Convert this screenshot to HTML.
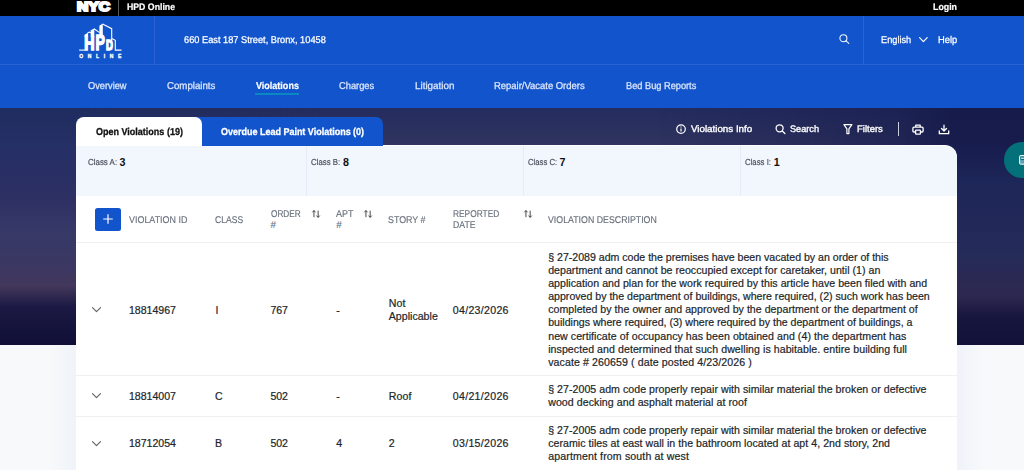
<!DOCTYPE html>
<html lang="en">
<head>
<meta charset="utf-8">
<title>HPD Online</title>
<style>
html,body{margin:0;padding:0;}
body{width:1024px;height:470px;overflow:hidden;position:relative;background:#f8f9fb;font-family:'Liberation Sans',sans-serif;}
.abs{position:absolute;}
.t{position:absolute;white-space:pre;line-height:14px;height:14px;font-family:'Liberation Sans',sans-serif;}
#topbar{left:0;top:0;width:1024px;height:16px;background:#000;}
#header{left:0;top:16px;width:1024px;height:48px;background:#1254cc;}
#hline{left:0;top:64px;width:1024px;height:1px;background:#2b63d6;}
#nav{left:0;top:65px;width:1024px;height:42.8px;background:#1254cc;}
.vdiv{width:1px;background:#2b63d6;top:16px;height:48px;}
#hero{left:0;top:107px;width:1024px;height:238px;background:linear-gradient(to bottom,rgb(36,44,94) 0px,rgb(48,52,95) 38px,rgb(50,54,100) 123px,rgb(56,48,88) 179px,rgb(26,24,66) 199px,rgb(19,18,58) 225px,rgb(17,15,55) 238px);}
#heroL{left:0;top:107px;width:320px;height:238px;background:linear-gradient(to bottom,rgb(31,44,94) 0px,rgb(37,48,102) 38px,rgb(41,47,100) 68px,rgb(46,48,99) 93px,rgb(54,57,104) 123px,rgb(60,55,98) 161px,rgb(67,55,91) 179px,rgb(28,26,68) 199px,rgb(19,18,58) 225px,rgb(17,15,55) 238px);
 -webkit-mask-image:linear-gradient(to right,#000 0,#000 80px,rgba(0,0,0,0) 320px);mask-image:linear-gradient(to right,#000 0,#000 80px,rgba(0,0,0,0) 320px);}
#heroR{left:660px;top:107px;width:364px;height:238px;background:linear-gradient(to bottom,rgb(22,27,75) 0px,rgb(23,28,76) 35px,rgb(29,38,88) 73px,rgb(37,43,89) 145px,rgb(46,40,80) 189px,rgb(23,22,62) 210px,rgb(18,17,58) 238px);
 -webkit-mask-image:linear-gradient(to left,#000 0,#000 70px,rgba(0,0,0,0.55) 130px,rgba(0,0,0,0.25) 250px,rgba(0,0,0,0) 364px);mask-image:linear-gradient(to left,#000 0,#000 70px,rgba(0,0,0,0.55) 130px,rgba(0,0,0,0.25) 250px,rgba(0,0,0,0) 364px);}
#shadow{left:48px;top:345px;width:937px;height:125px;background:linear-gradient(to right, rgba(240,244,250,0) 0, #eff3f9 28px, #eff3f9 909px, rgba(240,244,250,0) 937px);}
#card{left:76px;top:145px;width:881px;height:340px;background:#fff;border-radius:0 12px 0 0;}
#tab1{left:76px;top:117px;width:126px;height:29px;background:#fff;border-radius:8px 7px 0 0;}
#tab2{left:190px;top:117px;width:193px;height:28.5px;background:#1254cc;border-radius:0 7px 0 0;}
#classrow{left:76px;top:145.5px;width:881px;height:50px;background:#f2f6fd;border-radius:0 12px 0 0;}
.cdiv{top:145.5px;width:1px;height:50px;background:#e6ecf7;}
.rline{left:76px;width:881px;height:1px;background:#eef0f2;}
#plus{left:95px;top:207.5px;width:26px;height:23.8px;background:#1254cc;border-radius:2.5px;}
#fab{left:1004px;top:142px;width:36px;height:36px;border-radius:18px;background:#03707a;}
svg{position:absolute;overflow:visible;}
</style>
</head>
<body>
<div id="topbar" class="abs"></div>
<div id="header" class="abs"></div>
<div id="hline" class="abs"></div>
<div class="abs vdiv" style="left:154px"></div>
<div class="abs vdiv" style="left:863px"></div>
<div class="abs" style="left:118px;top:0;width:1px;height:16px;background:#5a5a5a"></div>
<div id="hero" class="abs"></div>
<div id="heroL" class="abs"></div>
<div id="heroR" class="abs"></div>
<div id="nav" class="abs"></div>
<div id="shadow" class="abs"></div>
<div id="card" class="abs"></div>
<div id="tab2" class="abs"></div>
<div id="tab1" class="abs"></div>
<div id="classrow" class="abs"></div>
<div class="abs cdiv" style="left:306px"></div>
<div class="abs cdiv" style="left:523px"></div>
<div class="abs cdiv" style="left:740px"></div>
<div class="abs rline" style="top:242.4px"></div>
<div class="abs rline" style="top:375.3px"></div>
<div class="abs rline" style="top:415.8px"></div>
<div id="plus" class="abs"></div>
<div id="fab" class="abs"></div>
<div class="abs" style="left:255px;top:93px;width:43.8px;height:2px;background:#0b87c2"></div>
<div class="abs" style="left:898px;top:122px;width:1px;height:14px;background:#c9cde0"></div>

<!-- NYC logo -->
<svg style="left:76px;top:1px" width="36" height="12" viewBox="0 0 36 12"><text x="1" y="10.3" font-family="'Liberation Sans',sans-serif" font-weight="700" font-size="12.8" fill="#fff" stroke="#fff" stroke-width="2" stroke-linejoin="miter" textLength="33" lengthAdjust="spacingAndGlyphs">NYC</text></svg>

<!-- HPD logo -->
<svg style="left:78px;top:22px" width="45" height="38" viewBox="78 22 45 38">
 <g fill="#fff" stroke="none">
  <path d="M84.5 37V34.7L88.1 32.7V37Z"/>
  <path d="M90.7 37V30.3L94.3 28.5V37Z"/>
  <path d="M99.4 35V25.8L102.8 23.6V35Z"/>
 </g>
 <g fill="none" stroke="#fff" stroke-width="1.1" stroke-linejoin="miter">
  <path d="M79.1 50.1H85"/>
  <path d="M87.6 32.8L89.4 32.1L90.9 33"/>
  <path d="M94 28.8L99.6 32.6"/>
  <path d="M102.6 23.9L111.7 28.7V50.1"/>
  <path d="M111.7 38.6L115.3 40.3V50.1H121.5"/>
 </g>
 <g font-family="'Liberation Sans',sans-serif" font-weight="700" fill="#fff" stroke="#fff" stroke-width="1.6" stroke-linejoin="miter">
  <text x="84.26" y="49.8" font-size="18.6" textLength="10.25" lengthAdjust="spacingAndGlyphs">H</text>
  <text x="95.59" y="49.8" font-size="21.5" textLength="9.27" lengthAdjust="spacingAndGlyphs">P</text>
  <text x="105.9" y="49.8" font-size="14.8" textLength="6.8" lengthAdjust="spacingAndGlyphs">D</text>
 </g>
 <text x="79.2" y="57.9" font-family="'Liberation Sans',sans-serif" font-weight="700" font-size="5" fill="#fff" stroke="#fff" stroke-width="0.3" textLength="42.2" lengthAdjust="spacing">ONLINE</text>
</svg>

<!-- header search icon -->
<svg style="left:839px;top:34px" width="11" height="10" viewBox="0 0 11 10" fill="none" stroke="#f4f7fe" stroke-width="1.1" stroke-linecap="round"><circle cx="4.4" cy="4.2" r="3.5"/><path d="M7 6.9L9.8 9.4"/></svg>
<!-- header chevron -->
<svg style="left:919px;top:37px" width="9" height="6" viewBox="0 0 9 6" fill="none" stroke="#fff" stroke-width="1.2" stroke-linecap="round" stroke-linejoin="round"><path d="M0.6 0.7L4.4 4.6L8.2 0.7"/></svg>

<!-- toolbar icons -->
<svg style="left:676px;top:124px" width="10" height="10" viewBox="0 0 10 10" fill="none" stroke="#fff" stroke-width="1.2"><circle cx="5" cy="5.1" r="4.3"/><path d="M5 4.4V7.5M5 2.5V3.5" stroke-width="1.2"/></svg>
<svg style="left:775px;top:124px" width="11" height="11" viewBox="0 0 11 11" fill="none" stroke="#fff" stroke-width="1.3" stroke-linecap="round"><circle cx="4.6" cy="4.3" r="3.5"/><path d="M7.3 7L9.9 9.5"/></svg>
<svg style="left:842.5px;top:124px" width="10" height="11" viewBox="0 0 10 11" fill="none" stroke="#fff" stroke-width="1.2" stroke-linejoin="round"><path d="M0.9 0.7H8.9L5.9 4.9V9.6H3.9V4.9Z"/></svg>
<svg style="left:912px;top:123.5px" width="12" height="11" viewBox="0 0 12 11" fill="none" stroke="#fff" stroke-width="1.3" stroke-linejoin="round"><path d="M3.8 3V1.1H8.2V3"/><path d="M3.4 8H2C1.3 8 0.9 7.6 0.9 7V4.2C0.9 3.5 1.3 3.1 2 3.1H10C10.7 3.1 11.1 3.5 11.1 4.2V7C11.1 7.6 10.7 8 10 8H8.6"/><rect x="3.6" y="6.1" width="4.8" height="4.1" rx="0.6"/></svg>
<svg style="left:938px;top:123.5px" width="12" height="11" viewBox="0 0 12 11" fill="none" stroke="#fff" stroke-width="1.3" stroke-linecap="round" stroke-linejoin="round"><path d="M6 1.2V6.8M3.5 4.5L6 7L8.5 4.5"/><path d="M1.3 6.8V9.7H10.7V6.8"/></svg>

<!-- plus -->
<svg style="left:103.3px;top:214px" width="10" height="10" viewBox="0 0 10 10" fill="none" stroke="#fff" stroke-width="1.2"><path d="M5 0.2V9.8M0.2 5H9.8"/></svg>

<!-- sort icons -->
<svg class="sort" style="left:312.1px;top:210.4px" width="9" height="8" viewBox="0 0 9 8" fill="none" stroke="#3c4043" stroke-width="0.95"><path d="M1.95 7.2V0.6M0.35 2.3L1.95 0.5L3.55 2.3M6.15 0.7V7.4M4.55 5.6L6.15 7.4L7.75 5.6"/></svg>
<svg class="sort" style="left:364.3px;top:210.4px" width="9" height="8" viewBox="0 0 9 8" fill="none" stroke="#3c4043" stroke-width="0.95"><path d="M1.95 7.2V0.6M0.35 2.3L1.95 0.5L3.55 2.3M6.15 0.7V7.4M4.55 5.6L6.15 7.4L7.75 5.6"/></svg>
<svg class="sort" style="left:523.7px;top:210.4px" width="9" height="8" viewBox="0 0 9 8" fill="none" stroke="#3c4043" stroke-width="0.95"><path d="M1.95 7.2V0.6M0.35 2.3L1.95 0.5L3.55 2.3M6.15 0.7V7.4M4.55 5.6L6.15 7.4L7.75 5.6"/></svg>

<!-- row chevrons -->
<svg style="left:92px;top:307px" width="9" height="6" viewBox="0 0 9 6" fill="none" stroke="#5c6168" stroke-width="1.1" stroke-linecap="round" stroke-linejoin="round"><path d="M0.5 0.6L4.5 4.7L8.5 0.6"/></svg>
<svg style="left:92px;top:393px" width="9" height="6" viewBox="0 0 9 6" fill="none" stroke="#5c6168" stroke-width="1.1" stroke-linecap="round" stroke-linejoin="round"><path d="M0.5 0.6L4.5 4.7L8.5 0.6"/></svg>
<svg style="left:92px;top:440.5px" width="9" height="6" viewBox="0 0 9 6" fill="none" stroke="#5c6168" stroke-width="1.1" stroke-linecap="round" stroke-linejoin="round"><path d="M0.5 0.6L4.5 4.7L8.5 0.6"/></svg>

<!-- fab icon -->
<svg style="left:1018.5px;top:155px" width="12" height="10" viewBox="0 0 12 10" fill="none" stroke="#fff" stroke-width="1"><rect x="0.6" y="0.6" width="10" height="8.6" rx="0.8" fill="#5aa3b3"/><rect x="1.6" y="1.6" width="8" height="3.4" fill="#03707a" stroke="none"/><path d="M2 3.2H9"/></svg>

<header class="site-header">
<span class="t" style="left:126.8px;top:1px;line-height:11px;height:11px;font-size:9.4px;font-weight:700;color:#fff;letter-spacing:0.0px;transform:scaleX(0.9306);transform-origin:0 0;text-rendering:geometricPrecision;-webkit-text-stroke:0.2px #fff;">HPD Online</span>
<span class="t" style="left:933.1px;top:1px;line-height:11px;height:11px;font-size:9.4px;font-weight:700;color:#fff;letter-spacing:0.0px;transform:scaleX(0.9406);transform-origin:0 0;text-rendering:geometricPrecision;-webkit-text-stroke:0.2px #fff;">Login</span>
<span class="t" style="left:183.5px;top:35px;line-height:11px;height:11px;font-size:9.8px;font-weight:400;color:#fff;letter-spacing:-0.0px;transform:scaleX(0.9433);transform-origin:0 0;text-rendering:geometricPrecision;-webkit-text-stroke:0.25px #fff;">660 East 187 Street, Bronx, 10458</span>
<span class="t" style="left:880.8px;top:35px;line-height:11px;height:11px;font-size:9.8px;font-weight:400;color:#fff;letter-spacing:0.0px;transform:scaleX(0.9396);transform-origin:0 0;text-rendering:geometricPrecision;-webkit-text-stroke:0.25px #fff;">English</span>
<span class="t" style="left:937.7px;top:35px;line-height:11px;height:11px;font-size:9.8px;font-weight:400;color:#fff;letter-spacing:-0.0px;transform:scaleX(0.9526);transform-origin:0 0;text-rendering:geometricPrecision;-webkit-text-stroke:0.25px #fff;">Help</span>
</header>
<nav class="main-nav">
<span class="t" style="left:87.8px;top:81px;line-height:11px;height:11px;font-size:10.0px;font-weight:400;color:#dfe8fb;letter-spacing:0.0px;transform:scaleX(0.9235);transform-origin:0 0;text-rendering:geometricPrecision;-webkit-text-stroke:0.25px #dfe8fb;">Overview</span>
<span class="t" style="left:166.9px;top:81px;line-height:11px;height:11px;font-size:10.0px;font-weight:400;color:#dfe8fb;letter-spacing:-0.0px;transform:scaleX(0.9674);transform-origin:0 0;text-rendering:geometricPrecision;-webkit-text-stroke:0.25px #dfe8fb;">Complaints</span>
<span class="t" style="left:255.9px;top:81px;line-height:11px;height:11px;font-size:10.0px;font-weight:700;color:#fff;letter-spacing:-0.0px;transform:scaleX(0.9011);transform-origin:0 0;text-rendering:geometricPrecision;-webkit-text-stroke:0.2px #fff;">Violations</span>
<span class="t" style="left:338.8px;top:81px;line-height:11px;height:11px;font-size:10.0px;font-weight:400;color:#dfe8fb;letter-spacing:0.0px;transform:scaleX(0.9309);transform-origin:0 0;text-rendering:geometricPrecision;-webkit-text-stroke:0.25px #dfe8fb;">Charges</span>
<span class="t" style="left:414.7px;top:81px;line-height:11px;height:11px;font-size:10.0px;font-weight:400;color:#dfe8fb;letter-spacing:0.0px;transform:scaleX(0.9842);transform-origin:0 0;text-rendering:geometricPrecision;-webkit-text-stroke:0.25px #dfe8fb;">Litigation</span>
<span class="t" style="left:494.4px;top:81px;line-height:11px;height:11px;font-size:10.0px;font-weight:400;color:#dfe8fb;letter-spacing:-0.0px;transform:scaleX(0.9441);transform-origin:0 0;text-rendering:geometricPrecision;-webkit-text-stroke:0.25px #dfe8fb;">Repair/Vacate Orders</span>
<span class="t" style="left:625.6px;top:81px;line-height:11px;height:11px;font-size:10.0px;font-weight:400;color:#dfe8fb;letter-spacing:0.0px;transform:scaleX(0.9229);transform-origin:0 0;text-rendering:geometricPrecision;-webkit-text-stroke:0.25px #dfe8fb;">Bed Bug Reports</span>
</nav>
<main>
<div class="tabs" role="tablist">
<span class="t" style="left:95.6px;top:127px;line-height:11px;height:11px;font-size:10.0px;font-weight:700;color:#111;letter-spacing:0.0px;transform:scaleX(0.9005);transform-origin:0 0;text-rendering:geometricPrecision;-webkit-text-stroke:0.3px #111;">Open Violations (19)</span>
<span class="t" style="left:220.9px;top:127px;line-height:11px;height:11px;font-size:10.0px;font-weight:700;color:#fff;letter-spacing:0.0px;transform:scaleX(0.8983);transform-origin:0 0;text-rendering:geometricPrecision;-webkit-text-stroke:0.3px #fff;">Overdue Lead Paint Violations (0)</span>
</div>
<div class="toolbar">
<span class="t" style="left:690.6px;top:124px;line-height:11px;height:11px;font-size:9.5px;font-weight:400;color:#fff;letter-spacing:0.0px;transform:scaleX(1.0283);transform-origin:0 0;text-rendering:geometricPrecision;-webkit-text-stroke:0.35px #fff;">Violations Info</span>
<span class="t" style="left:789.9px;top:124px;line-height:11px;height:11px;font-size:9.5px;font-weight:400;color:#fff;letter-spacing:-0.0px;transform:scaleX(0.9632);transform-origin:0 0;text-rendering:geometricPrecision;-webkit-text-stroke:0.35px #fff;">Search</span>
<span class="t" style="left:857.3px;top:124px;line-height:11px;height:11px;font-size:9.5px;font-weight:400;color:#fff;letter-spacing:0.0px;transform:scaleX(0.9971);transform-origin:0 0;text-rendering:geometricPrecision;-webkit-text-stroke:0.35px #fff;">Filters</span>
</div>
<div class="class-summary">
<span class="t" style="left:87.8px;top:157px;line-height:10px;height:10px;font-size:8.7px;font-weight:400;color:#474c57;letter-spacing:0.0px;transform:scaleX(0.9129);transform-origin:0 0;text-rendering:geometricPrecision;-webkit-text-stroke:0.15px #474c57;">Class A:</span>
<span class="t" style="left:119.4px;top:156px;line-height:12px;height:12px;font-size:10.7px;font-weight:700;color:#111;letter-spacing:0.0px;">3</span>
<span class="t" style="left:311.3px;top:157px;line-height:10px;height:10px;font-size:8.7px;font-weight:400;color:#474c57;letter-spacing:-0.0px;transform:scaleX(0.8993);transform-origin:0 0;text-rendering:geometricPrecision;-webkit-text-stroke:0.15px #474c57;">Class B:</span>
<span class="t" style="left:342.9px;top:156px;line-height:12px;height:12px;font-size:10.7px;font-weight:700;color:#111;letter-spacing:0.0px;">8</span>
<span class="t" style="left:528.0px;top:157px;line-height:10px;height:10px;font-size:8.7px;font-weight:400;color:#474c57;letter-spacing:0.0px;transform:scaleX(0.8864);transform-origin:0 0;text-rendering:geometricPrecision;-webkit-text-stroke:0.15px #474c57;">Class C:</span>
<span class="t" style="left:559.6px;top:156px;line-height:12px;height:12px;font-size:10.7px;font-weight:700;color:#111;letter-spacing:0.0px;">7</span>
<span class="t" style="left:745.0px;top:157px;line-height:10px;height:10px;font-size:8.7px;font-weight:400;color:#474c57;letter-spacing:0.0px;transform:scaleX(0.8975);transform-origin:0 0;text-rendering:geometricPrecision;-webkit-text-stroke:0.15px #474c57;">Class I:</span>
<span class="t" style="left:773.8px;top:156px;line-height:12px;height:12px;font-size:10.7px;font-weight:700;color:#111;letter-spacing:0.0px;">1</span>
</div>
<div class="violations-table" role="table">
<div role="row" class="thead">
<span class="t" style="left:128.8px;top:215px;line-height:11px;height:11px;font-size:9.8px;font-weight:400;color:#69717d;letter-spacing:0.0px;transform:scaleX(0.9116);transform-origin:0 0;text-rendering:geometricPrecision;-webkit-text-stroke:0.15px #69717d;">VIOLATION ID</span>
<span class="t" style="left:215.0px;top:215px;line-height:11px;height:11px;font-size:9.8px;font-weight:400;color:#69717d;letter-spacing:-0.0px;transform:scaleX(0.8743);transform-origin:0 0;text-rendering:geometricPrecision;-webkit-text-stroke:0.15px #69717d;">CLASS</span>
<span class="t" style="left:270.6px;top:209px;line-height:11px;height:11px;font-size:9.8px;font-weight:400;color:#69717d;letter-spacing:0.0px;transform:scaleX(0.8392);transform-origin:0 0;text-rendering:geometricPrecision;-webkit-text-stroke:0.15px #69717d;">ORDER</span>
<span class="t" style="left:270.6px;top:220px;line-height:11px;height:11px;font-size:9.8px;font-weight:400;color:#69717d;letter-spacing:0.0px;text-rendering:geometricPrecision;-webkit-text-stroke:0.15px #69717d;">#</span>
<span class="t" style="left:336.3px;top:209px;line-height:11px;height:11px;font-size:9.8px;font-weight:400;color:#69717d;letter-spacing:0.0px;transform:scaleX(0.918);transform-origin:0 0;text-rendering:geometricPrecision;-webkit-text-stroke:0.15px #69717d;">APT</span>
<span class="t" style="left:336.3px;top:220px;line-height:11px;height:11px;font-size:9.8px;font-weight:400;color:#69717d;letter-spacing:0.0px;text-rendering:geometricPrecision;-webkit-text-stroke:0.15px #69717d;">#</span>
<span class="t" style="left:388.4px;top:215px;line-height:11px;height:11px;font-size:9.8px;font-weight:400;color:#69717d;letter-spacing:0.0px;transform:scaleX(0.906);transform-origin:0 0;text-rendering:geometricPrecision;-webkit-text-stroke:0.15px #69717d;">STORY #</span>
<span class="t" style="left:452.5px;top:209px;line-height:11px;height:11px;font-size:9.8px;font-weight:400;color:#69717d;letter-spacing:0.0px;transform:scaleX(0.8532);transform-origin:0 0;text-rendering:geometricPrecision;-webkit-text-stroke:0.15px #69717d;">REPORTED</span>
<span class="t" style="left:452.5px;top:220px;line-height:11px;height:11px;font-size:9.8px;font-weight:400;color:#69717d;letter-spacing:0.0px;transform:scaleX(0.8856);transform-origin:0 0;text-rendering:geometricPrecision;-webkit-text-stroke:0.15px #69717d;">DATE</span>
<span class="t" style="left:547.8px;top:215px;line-height:11px;height:11px;font-size:9.8px;font-weight:400;color:#69717d;letter-spacing:-0.0px;transform:scaleX(0.8976);transform-origin:0 0;text-rendering:geometricPrecision;-webkit-text-stroke:0.15px #69717d;">VIOLATION DESCRIPTION</span>
</div>
<div role="row" class="tr">
<span class="t" style="left:129.0px;top:304px;line-height:12px;height:12px;font-size:10.6px;font-weight:400;color:#212529;letter-spacing:-0.018px;-webkit-text-stroke:0.2px #212529;">18814967</span>
<span class="t" style="left:215.5px;top:304px;line-height:12px;height:12px;font-size:10.6px;font-weight:400;color:#212529;letter-spacing:0.0px;-webkit-text-stroke:0.2px #212529;">I</span>
<span class="t" style="left:270.6px;top:304px;line-height:12px;height:12px;font-size:10.6px;font-weight:400;color:#212529;letter-spacing:-0.163px;-webkit-text-stroke:0.2px #212529;">767</span>
<span class="t" style="left:336.3px;top:304px;line-height:12px;height:12px;font-size:10.6px;font-weight:400;color:#212529;letter-spacing:0.0px;-webkit-text-stroke:0.2px #212529;">-</span>
<span class="t" style="left:388.8px;top:297px;line-height:12px;height:12px;font-size:10.6px;font-weight:400;color:#212529;letter-spacing:0.067px;-webkit-text-stroke:0.2px #212529;">Not</span>
<span class="t" style="left:388.8px;top:310px;line-height:12px;height:12px;font-size:10.6px;font-weight:400;color:#212529;letter-spacing:0.011px;-webkit-text-stroke:0.2px #212529;">Applicable</span>
<span class="t" style="left:452.8px;top:304px;line-height:12px;height:12px;font-size:10.6px;font-weight:400;color:#212529;letter-spacing:0.297px;-webkit-text-stroke:0.2px #212529;">04/23/2026</span>
<span class="t" style="left:548.2px;top:251px;line-height:12px;height:12px;font-size:10.6px;font-weight:400;color:#212529;letter-spacing:-0.008px;-webkit-text-stroke:0.2px #212529;">§ 27-2089 adm code the premises have been vacated by an order of this</span>
<span class="t" style="left:548.2px;top:264px;line-height:12px;height:12px;font-size:10.6px;font-weight:400;color:#212529;letter-spacing:0.026px;-webkit-text-stroke:0.2px #212529;">department and cannot be reoccupied except for caretaker, until (1) an</span>
<span class="t" style="left:548.2px;top:277px;line-height:12px;height:12px;font-size:10.6px;font-weight:400;color:#212529;letter-spacing:0.032px;-webkit-text-stroke:0.2px #212529;">application and plan for the work required by this article have been filed with and</span>
<span class="t" style="left:548.2px;top:290px;line-height:12px;height:12px;font-size:10.6px;font-weight:400;color:#212529;letter-spacing:-0.001px;-webkit-text-stroke:0.2px #212529;">approved by the department of buildings, where required, (2) such work has been</span>
<span class="t" style="left:548.2px;top:303px;line-height:12px;height:12px;font-size:10.6px;font-weight:400;color:#212529;letter-spacing:0.036px;-webkit-text-stroke:0.2px #212529;">completed by the owner and approved by the department or the department of</span>
<span class="t" style="left:548.2px;top:316px;line-height:12px;height:12px;font-size:10.6px;font-weight:400;color:#212529;letter-spacing:-0.004px;-webkit-text-stroke:0.2px #212529;">buildings where required, (3) where required by the department of buildings, a</span>
<span class="t" style="left:548.2px;top:330px;line-height:12px;height:12px;font-size:10.6px;font-weight:400;color:#212529;letter-spacing:0.057px;-webkit-text-stroke:0.2px #212529;">new certificate of occupancy has been obtained and (4) the department has</span>
<span class="t" style="left:548.2px;top:343px;line-height:12px;height:12px;font-size:10.6px;font-weight:400;color:#212529;letter-spacing:0.063px;-webkit-text-stroke:0.2px #212529;">inspected and determined that such dwelling is habitable. entire building full</span>
<span class="t" style="left:548.2px;top:356px;line-height:12px;height:12px;font-size:10.6px;font-weight:400;color:#212529;letter-spacing:0.101px;-webkit-text-stroke:0.2px #212529;">vacate # 260659 ( date posted 4/23/2026 )</span>
</div>
<div role="row" class="tr">
<span class="t" style="left:129.0px;top:390px;line-height:12px;height:12px;font-size:10.6px;font-weight:400;color:#212529;letter-spacing:-0.018px;-webkit-text-stroke:0.2px #212529;">18814007</span>
<span class="t" style="left:215.0px;top:390px;line-height:12px;height:12px;font-size:10.6px;font-weight:400;color:#212529;letter-spacing:0.0px;-webkit-text-stroke:0.2px #212529;">C</span>
<span class="t" style="left:270.6px;top:390px;line-height:12px;height:12px;font-size:10.6px;font-weight:400;color:#212529;letter-spacing:-0.163px;-webkit-text-stroke:0.2px #212529;">502</span>
<span class="t" style="left:336.3px;top:390px;line-height:12px;height:12px;font-size:10.6px;font-weight:400;color:#212529;letter-spacing:0.0px;-webkit-text-stroke:0.2px #212529;">-</span>
<span class="t" style="left:388.8px;top:390px;line-height:12px;height:12px;font-size:10.6px;font-weight:400;color:#212529;letter-spacing:0.077px;-webkit-text-stroke:0.2px #212529;">Roof</span>
<span class="t" style="left:452.8px;top:390px;line-height:12px;height:12px;font-size:10.6px;font-weight:400;color:#212529;letter-spacing:0.297px;-webkit-text-stroke:0.2px #212529;">04/21/2026</span>
<span class="t" style="left:548.2px;top:383px;line-height:12px;height:12px;font-size:10.6px;font-weight:400;color:#212529;letter-spacing:0.04px;-webkit-text-stroke:0.2px #212529;">§ 27-2005 adm code properly repair with similar material the broken or defective</span>
<span class="t" style="left:548.2px;top:396px;line-height:12px;height:12px;font-size:10.6px;font-weight:400;color:#212529;letter-spacing:0.066px;-webkit-text-stroke:0.2px #212529;">wood decking and asphalt material at roof</span>
</div>
<div role="row" class="tr">
<span class="t" style="left:129.0px;top:437px;line-height:12px;height:12px;font-size:10.6px;font-weight:400;color:#212529;letter-spacing:-0.018px;-webkit-text-stroke:0.2px #212529;">18712054</span>
<span class="t" style="left:215.0px;top:437px;line-height:12px;height:12px;font-size:10.6px;font-weight:400;color:#212529;letter-spacing:0.0px;-webkit-text-stroke:0.2px #212529;">B</span>
<span class="t" style="left:270.6px;top:437px;line-height:12px;height:12px;font-size:10.6px;font-weight:400;color:#212529;letter-spacing:-0.163px;-webkit-text-stroke:0.2px #212529;">502</span>
<span class="t" style="left:336.3px;top:437px;line-height:12px;height:12px;font-size:10.6px;font-weight:400;color:#212529;letter-spacing:0.0px;-webkit-text-stroke:0.2px #212529;">4</span>
<span class="t" style="left:388.8px;top:437px;line-height:12px;height:12px;font-size:10.6px;font-weight:400;color:#212529;letter-spacing:0.0px;-webkit-text-stroke:0.2px #212529;">2</span>
<span class="t" style="left:452.8px;top:437px;line-height:12px;height:12px;font-size:10.6px;font-weight:400;color:#212529;letter-spacing:0.297px;-webkit-text-stroke:0.2px #212529;">03/15/2026</span>
<span class="t" style="left:548.2px;top:424px;line-height:12px;height:12px;font-size:10.6px;font-weight:400;color:#212529;letter-spacing:0.04px;-webkit-text-stroke:0.2px #212529;">§ 27-2005 adm code properly repair with similar material the broken or defective</span>
<span class="t" style="left:548.2px;top:437px;line-height:12px;height:12px;font-size:10.6px;font-weight:400;color:#212529;letter-spacing:0.038px;-webkit-text-stroke:0.2px #212529;">ceramic tiles at east wall in the bathroom located at apt 4, 2nd story, 2nd</span>
<span class="t" style="left:548.2px;top:450px;line-height:12px;height:12px;font-size:10.6px;font-weight:400;color:#212529;letter-spacing:0.128px;-webkit-text-stroke:0.2px #212529;">apartment from south at west</span>
</div>
</div>
</main>
</body>
</html>
